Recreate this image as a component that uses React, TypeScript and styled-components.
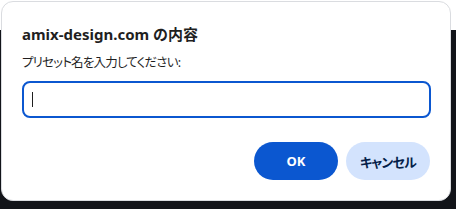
import React from "react";
import styled, { createGlobalStyle } from "styled-components";

const Global = createGlobalStyle`
  html, body {
    margin: 0;
    padding: 0;
    width: 456px;
    height: 209px;
    overflow: hidden;
    background: linear-gradient(#ffffff 0 30px, #121419 30px);
  }
  body {
    font-family: "Noto Sans", "Noto Sans CJK JP", sans-serif;
    font-feature-settings: "palt";
  }
`;

const Page = styled.div`
  padding: 1px 0 0 1px;
`;

const Dialog = styled.div`
  box-sizing: border-box;
  width: 450px;
  height: 200px;
  background: #ffffff;
  border: 1px solid #dadce0;
  border-radius: 12px;
  padding: 21px 20px 0 20px;
  display: flex;
  flex-direction: column;
`;

const Title = styled.h1`
  margin: 0;
  font-size: 15px;
  line-height: 22px;
  font-weight: 700;
  color: #1f1f1f;
`;

const Label = styled.p`
  margin: 9px 0 0;
  font-size: 12.5px;
  line-height: 18px;
  letter-spacing: -0.8px;
  color: #1f1f1f;
`;

const FieldWrap = styled.div`
  position: relative;
  margin-top: 9px;
  width: 409px;
`;

const Field = styled.input`
  box-sizing: border-box;
  display: block;
  width: 100%;
  height: 37px;
  border: 2px solid #0b57d0;
  border-radius: 8px;
  padding: 0 9px;
  font-size: 14px;
  font-family: inherit;
  outline: none;
  caret-color: transparent;
`;

const Caret = styled.span`
  position: absolute;
  left: 10px;
  top: 11px;
  width: 1px;
  height: 15px;
  background: #1f1f1f;
`;

const Actions = styled.div`
  display: flex;
  justify-content: flex-end;
  gap: 8px;
  margin-top: 24px;
`;

const Button = styled.button<{ $primary?: boolean }>`
  width: 84px;
  height: 38px;
  border: none;
  border-radius: 19px;
  font-family: inherit;
  font-feature-settings: "palt";
  font-size: 13px;
  letter-spacing: ${(p) => (p.$primary ? "0" : "-0.8px")};
  font-weight: 700;
  background: ${(p) => (p.$primary ? "#0b57d0" : "#d3e3fd")};
  color: ${(p) => (p.$primary ? "#ffffff" : "#041e49")};
  cursor: pointer;
`;

export default function App() {
  return (
    <>
      <Global />
      <Page>
        <Dialog>
          <Title>amix-design.com の内容</Title>
          <Label>プリセット名を入力してください:</Label>
          <FieldWrap>
            <Field />
            <Caret />
          </FieldWrap>
          <Actions>
            <Button $primary>OK</Button>
            <Button>キャンセル</Button>
          </Actions>
        </Dialog>
      </Page>
    </>
  );
}
